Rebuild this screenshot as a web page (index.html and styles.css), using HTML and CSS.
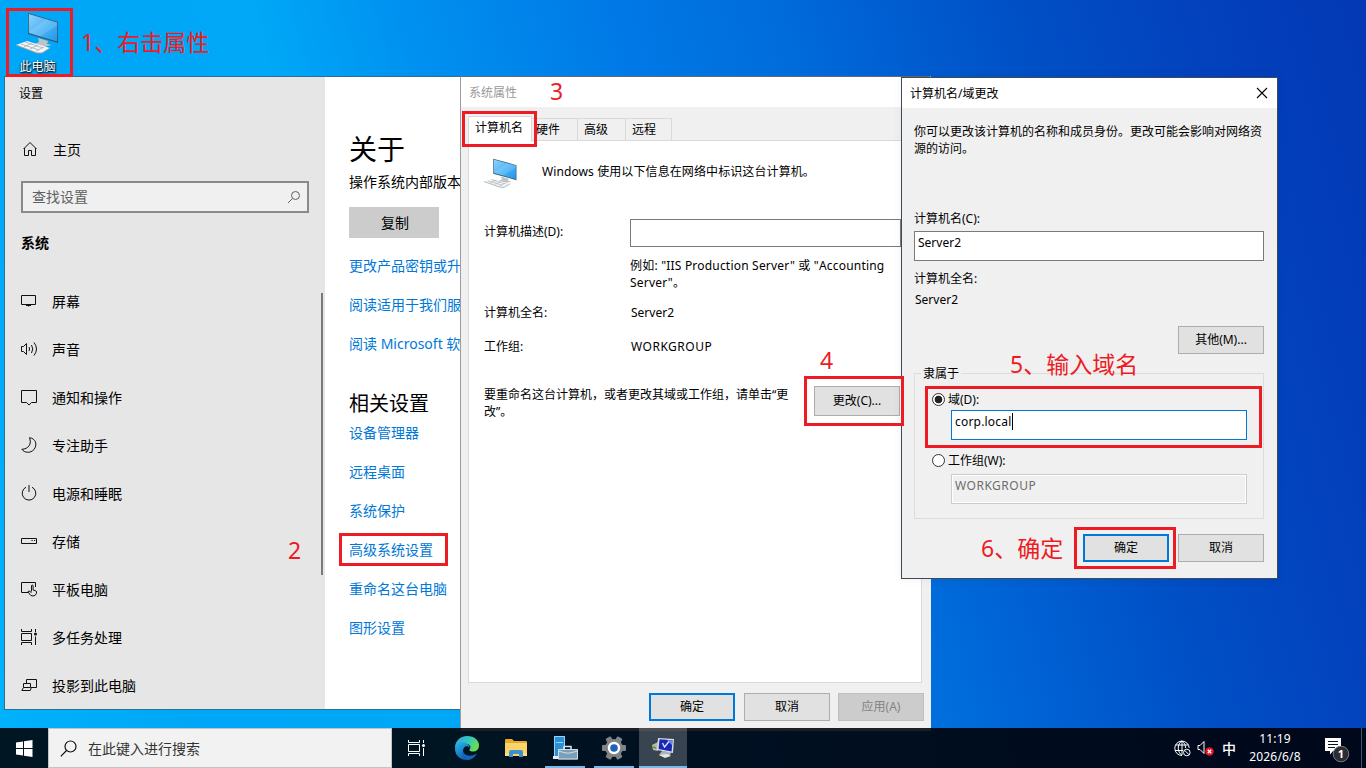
FILE: index.html
```html
<!DOCTYPE html>
<html lang="zh-CN">

<head>
    <meta charset="UTF-8">
    <meta name="viewport" content="width=device-width, initial-scale=1.0">
    <title>加入域 - 系统属性</title>
    <link rel="stylesheet" href="styles.css">
</head>

<body>
    <!-- Shared icon of the computer -->
    <svg class="defs" width="0" height="0">
        <defs>
            <linearGradient id="screen" x1="0" y1="0" x2="1" y2="1">
                <stop offset="0" stop-color="#8fd3fb" />
                <stop offset="0.5" stop-color="#4cb4f5" />
                <stop offset="1" stop-color="#2196ec" />
            </linearGradient>
            <linearGradient id="edge1" x1="0" y1="0" x2="0.7" y2="1">
                <stop offset="0" stop-color="#2ab7ec" />
                <stop offset="1" stop-color="#0b56a8" />
            </linearGradient>
            <linearGradient id="edge2" x1="0" y1="0" x2="1" y2="0.4">
                <stop offset="0" stop-color="#28a9e6" />
                <stop offset="0.6" stop-color="#35c6b8" />
                <stop offset="1" stop-color="#66dd55" />
            </linearGradient>
            <symbol id="pc" viewBox="0 0 44 42">
                <path d="M22 26l10 3-1 3 5 1-8 2-9-3 4-2z" fill="#b9c4cb" />
                <path d="M12 1l30 9v21l-30-9z" fill="#3b5666" />
                <path d="M12.800 2l28.400 8.600v19l-28.400-8.500z" fill="url(#screen)" />
                <path d="M12.800 20L30 7.200l11.200 3.400v3L24 24.500z" fill="#fff" opacity=".14" />
                <path d="M0 33l11-4 23 7-8 5h-5z" fill="#f2f4f5" />
                <path d="M0 33l21 8h5l8-5" fill="none" stroke="#9aa5ab" />
                <path d="M5 32l18 6M9 30l18 6M8 35l8-4M14 37l8-4M20 39l8-4" stroke="#a7b0b5" stroke-width=".8" />
            </symbol>
        </defs>
    </svg>

    <div class="desktop">
        <div class="desktop-icon">
            <svg width="44" height="44"><use href="#pc" /></svg>
            <span>此电脑</span>
        </div>

        <!-- Settings -->
        <div class="window settings">
            <div class="sidebar">
                <div class="sidebar-title">设置</div>
                <div class="nav-item home">
                    <svg width="16" height="16" viewBox="0 0 16 16"><path d="M1.500 8L8 1.500l6.500 6.500M2.500 7V14.500h4V9.500h3v5h4V7" /></svg>
                    主页
                </div>
                <div class="settings-search">
                    <span>查找设置</span>
                    <svg width="14" height="14" viewBox="0 0 14 14"><circle cx="8.500" cy="5.500" r="4" /><path d="M5.500 8.500L1 13" /></svg>
                </div>
                <h2>系统</h2>
                <div class="nav">
                    <div class="nav-item">
                        <svg width="16" height="16" viewBox="0 0 16 16"><path d="M.5 2.500h14v9H.5zM7.500 11.500v2M5 12.500h5" /></svg>
                        屏幕
                    </div>
                    <div class="nav-item">
                        <svg width="16" height="16" viewBox="0 0 16 16"><path d="M.5 5.500h2L5.500 2.500v11L2.500 10.500H.5zM8 6q1.200 2 0 4M10.500 4q2.500 4 0 8M13 1.500q5 6.500 0 13" /></svg>
                        声音
                    </div>
                    <div class="nav-item">
                        <svg width="16" height="17" viewBox="0 0 16 17"><path d="M.5 1.500h15v12h-5L8 16l-2.500-2.500h-5z" /></svg>
                        通知和操作
                    </div>
                    <div class="nav-item">
                        <svg width="16" height="16" viewBox="0 0 16 16"><path d="M8.500.700C15 1.500 16.500 8 13 12.500C9.500 16.500 3.500 16 .8 12.300C7.500 12 11 7 8.500.700z" /></svg>
                        专注助手
                    </div>
                    <div class="nav-item">
                        <svg width="16" height="16" viewBox="0 0 16 16"><path d="M8 0v7M5 2.200a6.800 6.800 0 1 0 6 0" /></svg>
                        电源和睡眠
                    </div>
                    <div class="nav-item">
                        <svg width="16" height="16" viewBox="0 0 16 16"><path d="M.5 5.500h15v5H.5zM10.500 7.500h1.200M13 7.500h1.200" /></svg>
                        存储
                    </div>
                    <div class="nav-item">
                        <svg width="16" height="16" viewBox="0 0 16 16"><path d="M7 11.500H.5v-10h14V6M10.500 10.500V5q0-1 .8-1t.8 1v4l3 1q.8.400.3 2.500Q14.500 15 12 15t-3.500-2l-1.500-2.500q1-1 2 0l1.500 1" /></svg>
                        平板电脑
                    </div>
                    <div class="nav-item">
                        <svg width="16" height="16" viewBox="0 0 16 16"><path d="M.5 0v2.500h10V0M.5 4.500h10v7H.5zM.5 16v-2.500h10V16M14.500 0v3M14.500 7.500V16" /><circle class="dot" cx="14.500" cy="5" r="1.500" /></svg>
                        多任务处理
                    </div>
                    <div class="nav-item">
                        <svg width="16" height="16" viewBox="0 0 16 16"><path d="M5.500 6V2.500h10v8H10M2.500 6.500h7v4h-7zM2.500 10.500L.8 13.500h8.500l1-3" /></svg>
                        投影到此电脑
                    </div>
                </div>
                <div class="scrollbar"></div>
            </div>
            <div class="about">
                <h1>关于</h1>
                <p>操作系统内部版本</p>
                <button class="copy-btn">复制</button>
                <div class="links">
                    <a>更改产品密钥或升级</a>
                    <a>阅读适用于我们服务</a>
                    <a>阅读 Microsoft 软件</a>
                </div>
                <h3>相关设置</h3>
                <div class="links related">
                    <a>设备管理器</a>
                    <a>远程桌面</a>
                    <a>系统保护</a>
                    <a>高级系统设置</a>
                    <a>重命名这台电脑</a>
                    <a>图形设置</a>
                </div>
            </div>
        </div>

        <!-- System properties -->
        <div class="window sysprops">
            <div class="titlebar inactive">系统属性</div>
            <div class="tabs">
                <span class="tab active">计算机名</span>
                <span class="tab tab-hardware">硬件</span>
                <span class="tab">高级</span>
                <span class="tab tab-remote">远程</span>
            </div>
            <div class="tab-panel">
                <div class="intro">
                    <svg width="34" height="30" viewBox="0 0 44 42" preserveAspectRatio="none"><use href="#pc" width="44" height="42" /></svg>
                    <span>Windows 使用以下信息在网络中标识这台计算机。</span>
                </div>
                <div class="row row-desc">
                    <label>计算机描述(D):</label>
                    <div class="textbox"></div>
                </div>
                <div class="row row-example">
                    <span></span>
                    <p>例如: "IIS Production Server" 或 "Accounting<br>Server"。</p>
                </div>
                <div class="row row-value"><span>计算机全名:</span><span class="value">Server2</span></div>
                <div class="row row-value"><span>工作组:</span><span class="value caps">WORKGROUP</span></div>
                <div class="rename">
                    <p>要重命名这台计算机，或者更改其域或工作组，请单击“更<br>改”。</p>
                    <button class="btn change">更改(C)...</button>
                </div>
            </div>
            <div class="actions">
                <button class="btn default">确定</button>
                <button class="btn">取消</button>
                <button class="btn" disabled>应用(A)</button>
            </div>
        </div>

        <!-- Domain change dialog -->
        <div class="window dialog">
            <div class="titlebar">
                <span>计算机名/域更改</span>
                <svg width="12" height="12" viewBox="0 0 12 12"><path d="M1 1l10 10M11 1L1 11" stroke="#000" stroke-width="1.100" /></svg>
            </div>
            <div class="dialog-body">
                <p class="notice">你可以更改该计算机的名称和成员身份。更改可能会影响对网络资<br>源的访问。</p>
                <label class="name-label">计算机名(C):</label>
                <div class="textbox">Server2</div>
                <div class="full-label">计算机全名:</div>
                <div class="full-name">Server2</div>
                <button class="btn more">其他(M)...</button>
                <div class="group">
                    <span class="legend">隶属于</span>
                    <div class="radio checked"><i></i>域(D):</div>
                    <div class="textbox focused">corp.local<span class="caret"></span></div>
                    <div class="radio second"><i></i>工作组(W):</div>
                    <div class="textbox disabled caps">WORKGROUP</div>
                </div>
                <div class="dialog-actions">
                    <button class="btn default">确定</button>
                    <button class="btn">取消</button>
                </div>
            </div>
        </div>

        <!-- Taskbar -->
        <div class="taskbar">
            <div class="start">
                <svg width="17" height="17" viewBox="0 0 17 17" fill="#fff"><path d="M0 2.400L7 1.400V8H0zM8 1.300L16.500 0v8H8zM0 9h7v6.600l-7-1zM8 9h8.500v8L8 15.700z" /></svg>
            </div>
            <div class="task-search">
                <svg width="17" height="17" viewBox="0 0 17 17" fill="none" stroke="#111" stroke-width="1.200"><circle cx="10.500" cy="6.500" r="5.500" /><path d="M6.500 10.500L.8 16.300" /></svg>
                <span>在此键入进行搜索</span>
            </div>
            <div class="task taskview">
                <svg width="17" height="16" viewBox="0 0 17 16" fill="none" stroke="#fff"><path d="M.5 0v2.500h11V0M.5 4.500h11v7H.5zM.5 16v-2.500h11V16M15.500 0v3M15.500 8V16" /><circle cx="15.500" cy="5.500" r="1.500" fill="#fff" stroke="none" /></svg>
            </div>
            <div class="task edge">
                <svg width="24" height="24" viewBox="0 0 24 24">
                    <path d="M0 12C0 5 5 0 12 0c8 0 12 5 12 9.500c0 4-3 6-6 6c-3.500 0-4-1.500-3.200-2.500c2-3-1-5-3.800-5C6 8 1 10 0 12z" fill="url(#edge2)" />
                    <path d="M0 12C1 7 5 6 9 6.500c4 .5 5.500 3 5.500 5.500C13 9 8 10 8 15c0 4 4 8 10 6.500C13 26 0 24.500 0 12z" fill="url(#edge1)" />
                    <path d="M8 14c0 5 6 8 14 3.500C20 21 17 23.500 13 24C8 23 6 18 8 14z" fill="#1267bd" />
                </svg>
            </div>
            <div class="task explorer">
                <svg width="22" height="19" viewBox="0 0 22 19">
                    <path d="M0 1q0-1 1-1h6l2 2h12q1 0 1 1v14H0z" fill="#e8a92c" />
                    <path d="M0 4h22v13H0z" fill="#fbd469" />
                    <path d="M4 18v-5q0-2 2-2h10q2 0 2 2v5h-4v-3H8v3z" fill="#3d8fd0" />
                    <path d="M0 14h4v3H0zM18 14h4v3h-4z" fill="#ffdf80" />
                </svg>
            </div>
            <div class="task running server">
                <svg width="25" height="24" viewBox="0 0 25 24">
                    <path d="M1 0h11v21H1z" fill="#2a90d6" />
                    <path d="M1.500.500h10v20h-10zM3 6.500h7" fill="none" stroke="#9bd3f7" />
                    <path d="M0 20h8v3H0z" fill="#e5edf2" />
                    <path d="M11 13v-2.500h7V13" fill="none" stroke="#d9e5ee" stroke-width="1.500" />
                    <path d="M5 13h20v10.500H5z" fill="#7c9fb9" />
                    <path d="M5.500 13.500h19v9.500h-19zM5 15l8 2h4l8-2" fill="none" stroke="#d2e0ea" />
                </svg>
            </div>
            <div class="task running gear">
                <svg width="24" height="24" viewBox="0 0 24 24">
                    <g fill="#808386">
                        <circle cx="12" cy="12" r="9" />
                        <rect x="9" y="0" width="6" height="24" rx="1" transform="rotate(30 12 12)" />
                        <rect x="9" y="0" width="6" height="24" rx="1" transform="rotate(90 12 12)" />
                        <rect x="9" y="0" width="6" height="24" rx="1" transform="rotate(150 12 12)" />
                    </g>
                    <circle cx="12" cy="12" r="5" fill="#1d63b8" stroke="#fff" stroke-width="2.400" />
                </svg>
            </div>
            <div class="task running current">
                <svg width="23" height="22" viewBox="0 0 23 22">
                    <path d="M0 8l6-3v9l-5-1z" fill="#b5b8ad" />
                    <path d="M1 10l3 1" stroke="#41a62a" stroke-width="1.500" />
                    <path d="M10 14l9 1-1 4-6 1-5-2z" fill="#aeb3b8" />
                    <path d="M6 1l16 1-1 14-16-3z" fill="#dadde0" />
                    <path d="M7.500 2.300l13 .9-.9 11.200-13-2.400z" fill="#1727b4" />
                    <path d="M15 3l5.500.200-.4 5z" fill="#6b87ea" />
                    <path d="M10.500 6l2 4L17 4.500" fill="none" stroke="#dfe6ff" stroke-width="1.300" />
                    <path d="M7 18l8-1 4 2-6 2z" fill="#e4e6e8" />
                </svg>
            </div>
            <div class="tray">
                <svg class="globe" width="17" height="17" viewBox="0 0 17 17" fill="none" stroke="#fff">
                    <path d="M8 15.500A7.200 7.200 0 1 1 15.200 8M8 15.500C3 12 3 4 8 .8C10.500 3 11.500 5 11.500 8M1.500 5h13M1 10.500h8M8 1v14" />
                    <circle cx="12.800" cy="12.500" r="3.300" /><path d="M10.500 10.200l4.600 4.600" />
                </svg>
                <svg class="volume" width="18" height="16" viewBox="0 0 18 16">
                    <path d="M1 5.500h2l4-4v12l-4-4H1z" fill="none" stroke="#fff" />
                    <circle cx="12.500" cy="11.500" r="4.300" fill="#e81123" />
                    <path d="M10.800 9.800l3.400 3.400M14.200 9.800l-3.400 3.400" stroke="#fff" stroke-width="1.300" />
                </svg>
                <span class="ime">中</span>
                <div class="clock"><span>11:19</span><span>2026/6/8</span></div>
                <div class="notify">
                    <svg width="25" height="25" viewBox="0 0 25 25">
                        <path d="M0 0h16v13H8l-3 3.500V13H0z" fill="#fff" />
                        <path d="M3 3.500h10M3 6.500h10M3 9.500h7" stroke="#0a1222" />
                        <circle cx="16" cy="16" r="7.800" fill="#2b2d31" stroke="#76797d" />
                        <text x="16" y="20" text-anchor="middle">1</text>
                    </svg>
                </div>
                <div class="show-desktop"></div>
            </div>
        </div>

        <!-- Step marks drawn over the windows -->
        <div class="mark mark-1"></div>
        <div class="mark mark-2"></div>
        <div class="mark mark-3"></div>
        <div class="mark mark-4"></div>
        <div class="mark mark-5"></div>
        <div class="mark mark-6"></div>
        <div class="step step-1">1、右击属性</div>
        <div class="step step-2">2</div>
        <div class="step step-3">3</div>
        <div class="step step-4">4</div>
        <div class="step step-5">5、输入域名</div>
        <div class="step step-6">6、确定</div>
    </div>
</body>

</html>
```
FILE: styles.css
```css
* {
    margin: 0;
    padding: 0;
    box-sizing: border-box;
}

body {
    font-family: 'Noto Sans', 'Noto Sans CJK SC', sans-serif;
    font-size: 12px;
    color: #000;
    overflow: hidden;
}

button {
    font-family: inherit;
}

.defs {
    position: absolute;
}

.desktop {
    position: relative;
    width: 1366px;
    height: 768px;
    overflow: hidden;
    background: linear-gradient(75deg, #00b2fb 0, #00a6f7 14%, #00a8f7 29%, #0092f0 38%, #0079e6 52%, #006edc 61%, #005fd2 69%, #0050c6 77%, #0341bd 89%, #0338b4 100%);
}

.desktop-icon {
    position: absolute;
    left: 6px;
    top: 8px;
    width: 63px;
    display: flex;
    flex-direction: column;
    align-items: center;
    padding-top: 3px;
}

.desktop-icon span {
    color: #fff;
    line-height: 16px;
    margin-top: 4px;
    text-shadow: 0 1px 2px #000, 1px 1px 2px #000;
}

.window {
    position: absolute;
    border: 1px solid #4e6470;
}

.titlebar {
    display: flex;
    justify-content: space-between;
    align-items: center;
    height: 30px;
    padding: 0 9px 1px 8px;
    background: #fff;
}

.titlebar.inactive {
    color: #999;
}

/* Settings */
.settings {
    left: 4px;
    top: 76px;
    width: 500px;
    height: 634px;
    display: flex;
    background: #fff;
    border-color: #2a7195;
    font-size: 14px;
}

.sidebar {
    position: relative;
    width: 320px;
    background: #e6e6e6;
}

.sidebar-title {
    height: 34px;
    line-height: 34px;
    padding-left: 14px;
    font-size: 12px;
}

.nav-item {
    display: flex;
    align-items: center;
    gap: 15px;
    height: 48px;
    padding-left: 16px;
}

.nav-item.home {
    margin-top: 15px;
    padding-left: 17px;
    padding-bottom: 2px;
}

.nav-item svg,
.settings-search svg {
    fill: none;
    stroke: #111;
    stroke-width: 1;
}

.nav-item svg .dot {
    fill: #111;
    stroke: none;
}

.settings-search {
    display: flex;
    align-items: center;
    justify-content: space-between;
    width: 288px;
    height: 32px;
    margin: 7px 0 0 16px;
    padding: 0 6px 3px 9px;
    border: 2px solid #8a8a8a;
    background: #f0f0f0;
    color: #606060;
}

.settings-search svg {
    stroke: #606060;
    margin-top: 2px;
}

.sidebar h2 {
    margin: 18px 0 22px 16px;
    font-size: 14px;
    line-height: 24px;
}

.scrollbar {
    position: absolute;
    left: 316px;
    top: 216px;
    width: 2px;
    height: 282px;
    background: #7a7a7a;
}

.about {
    width: 178px;
    padding: 58px 0 0 24px;
    white-space: nowrap;
    overflow: hidden;
}

.about h1 {
    font-size: 28px;
    font-weight: normal;
    line-height: 28px;
}

.about p {
    margin-top: 9px;
    line-height: 20px;
}

.copy-btn {
    display: block;
    width: 90px;
    height: 31px;
    margin: 15px 0 8px;
    padding: 0 0 2px 2px;
    border: none;
    background: #ccc;
    font-size: 14px;
}

.links a {
    display: block;
    line-height: 39px;
    color: #0078d7;
}

.about h3 {
    margin-top: 26px;
    font-size: 20px;
    font-weight: normal;
    line-height: 30px;
}

.links.related {
    margin-top: -6px;
}

/* Dialog controls */
.btn {
    width: 86px;
    height: 28px;
    padding-bottom: 2px;
    border: 1px solid #adadad;
    background: #e1e1e1;
    font-size: 12px;
    color: #000;
}

.btn.default {
    border: 2px solid #0078d7;
}

.btn:disabled {
    border-color: #bfbfbf;
    background: #ccc;
    color: #838383;
}

.textbox {
    height: 30px;
    padding: 2px 3px;
    border: 1px solid #7a7a7a;
    background: #fff;
    line-height: 17px;
}

.caps {
    letter-spacing: 0.5px;
}

/* System properties */
.sysprops {
    left: 460px;
    top: 76px;
    width: 471px;
    height: 655px;
    background: #f0f0f0;
    border-color: #5a6a76 #f0f0f0 #f0f0f0 #9d9d9d;
}

.tabs {
    display: flex;
    align-items: flex-end;
    height: 34px;
    padding: 9px 0 0 7px;
}

.tab {
    width: 49px;
    height: 23px;
    margin-right: -1px;
    padding-left: 6px;
    border: 1px solid #d9d9d9;
    border-bottom: none;
    line-height: 22px;
}

.tab.active {
    position: relative;
    z-index: 1;
    width: 64px;
    height: 26px;
    margin-bottom: -1px;
    background: #fff;
}

.tab-hardware {
    width: 47px;
    padding-left: 4px;
}

.tab-remote {
    width: 47px;
}

.tab-panel {
    width: 454px;
    height: 543px;
    margin-left: 7px;
    margin-top: -1px;
    padding: 16px 0 0 15px;
    border: 1px solid #d9d9d9;
    background: #fff;
}

.intro {
    display: flex;
    align-items: center;
    gap: 24px;
    height: 32px;
}

.intro span {
    margin-top: -4px;
    letter-spacing: 0.1px;
}

.row {
    display: grid;
    grid-template-columns: 146px 1fr;
    line-height: 17px;
}

.row-desc {
    align-items: center;
    margin-top: 30px;
}

.row-desc label {
    margin-top: -4px;
}

.row-desc .textbox {
    width: 271px;
    height: 28px;
}

.row-example {
    margin-top: 10px;
    margin-bottom: 13px;
    letter-spacing: 0.2px;
}

.row-value {
    margin-bottom: 17px;
}

.row-value .value {
    padding-left: 1px;
}

.rename {
    display: flex;
    justify-content: space-between;
    align-items: flex-start;
    padding-right: 21px;
    margin-top: 31px;
    line-height: 17px;
    white-space: nowrap;
}

.btn.change {
    height: 30px;
}

.actions {
    display: flex;
    gap: 9px;
    margin: 10px 0 0 188px;
}

.actions .btn:last-child {
    margin-left: -1px;
}

/* Domain change dialog */
.dialog {
    left: 901px;
    top: 77px;
    width: 377px;
    height: 502px;
    background: #f0f0f0;
    border-color: #3f4a58;
    box-shadow: 0 0 10px rgba(0, 0, 0, 0.06);
}

.dialog-body {
    display: flex;
    flex-direction: column;
    padding: 15px 13px 0 12px;
    line-height: 17px;
}

.notice {
    white-space: nowrap;
}

.name-label {
    margin-top: 53px;
    margin-bottom: 4px;
}

.full-label {
    margin-top: 9px;
}

.full-name {
    margin-top: 4px;
    padding-left: 1px;
}

.btn.more {
    align-self: flex-end;
    margin-top: 18px;
}

.group {
    display: flex;
    flex-direction: column;
    height: 146px;
    margin-top: 19px;
    padding: 0 16px 0 36px;
    border: 1px solid #dcdcdc;
}

.legend {
    align-self: flex-start;
    margin: -9px 0 0 -30px;
    padding: 0 2px;
    background: #f0f0f0;
}

.radio {
    display: flex;
    align-items: center;
    gap: 3px;
    margin: 9px 0 2px -19px;
}

.radio i {
    width: 13px;
    height: 13px;
    border: 1px solid #333;
    border-radius: 50%;
    background: #fff;
}

.radio.checked i {
    background: radial-gradient(circle, #222 0 3.500px, #fff 4.200px);
}

.radio.second {
    margin: 12px 0 5px -19px;
}

.textbox.focused {
    display: flex;
    border-color: #0078d7;
    letter-spacing: 0.2px;
}

.caret {
    width: 1px;
    height: 17px;
    background: #000;
}

.textbox.disabled {
    border-color: #ccc;
    background: #f0f0f0;
    box-shadow: inset 0 0 0 1px #fff;
    color: #6d6d6d;
}

.dialog-actions {
    display: flex;
    justify-content: flex-end;
    gap: 9px;
    margin-top: 15px;
}

/* Taskbar */
.taskbar {
    position: absolute;
    left: 0;
    top: 728px;
    width: 1366px;
    height: 40px;
    display: flex;
    background: rgba(0, 0, 4, 0.880);
    color: #fff;
}

.start {
    display: flex;
    align-items: center;
    justify-content: center;
    width: 48px;
}

.task-search {
    display: flex;
    align-items: center;
    gap: 11px;
    width: 344px;
    padding-left: 11px;
    border: 1px solid #c4c4c4;
    background: #f2f2f2;
    color: #333;
    font-size: 14px;
}

.task {
    display: flex;
    align-items: center;
    justify-content: center;
    width: 48px;
    margin-right: 1px;
}

.edge {
    margin-left: 2px;
}

.task.running {
    width: 40px;
    margin: 0 4px 0 5px;
    border-bottom: 2px solid #76b9ed;
    padding-top: 2px;
}

.task.server {
    margin-left: 4px;
}

.task.current {
    width: 48px;
    margin: 0 0 0 1px;
    background: rgba(255, 255, 255, 0.220);
}

.tray {
    display: flex;
    align-items: center;
    margin-left: auto;
}

.volume {
    margin-left: 6px;
}

.ime {
    margin-left: 7px;
    font-size: 14px;
    font-weight: 500;
}

.clock {
    display: flex;
    flex-direction: column;
    align-items: center;
    width: 52px;
    margin-left: 13px;
    margin-right: 1px;
    line-height: 18px;
    letter-spacing: 0.2px;
}

.notify {
    margin-left: 23px;
    padding-top: 8px;
}

.notify text {
    fill: #fff;
    font-size: 11px;
    font-weight: bold;
}

.show-desktop {
    width: 5px;
    height: 40px;
    margin-left: 11px;
    border-left: 1px solid #4b5260;
}

/* Step marks */
.mark {
    position: absolute;
    border: 3px solid #ed1c24;
}

.mark-1 {
    left: 6px;
    top: 8px;
    width: 67px;
    height: 69px;
}

.mark-2 {
    left: 339px;
    top: 533px;
    width: 109px;
    height: 33px;
}

.mark-3 {
    left: 462px;
    top: 111px;
    width: 75px;
    height: 36px;
}

.mark-4 {
    left: 804px;
    top: 376px;
    width: 100px;
    height: 50px;
}

.mark-5 {
    left: 925px;
    top: 386px;
    width: 337px;
    height: 62px;
}

.mark-6 {
    left: 1074px;
    top: 527px;
    width: 102px;
    height: 42px;
}

.step {
    position: absolute;
    color: #ed1c24;
    font-size: 23px;
    line-height: 30px;
    white-space: nowrap;
}

.step-1 {
    left: 81px;
    top: 27px;
}

.step-2 {
    left: 288px;
    top: 535px;
}

.step-3 {
    left: 550px;
    top: 76px;
}

.step-4 {
    left: 820px;
    top: 345px;
}

.step-5 {
    left: 1010px;
    top: 349px;
}

.step-6 {
    left: 981px;
    top: 533px;
}
```
